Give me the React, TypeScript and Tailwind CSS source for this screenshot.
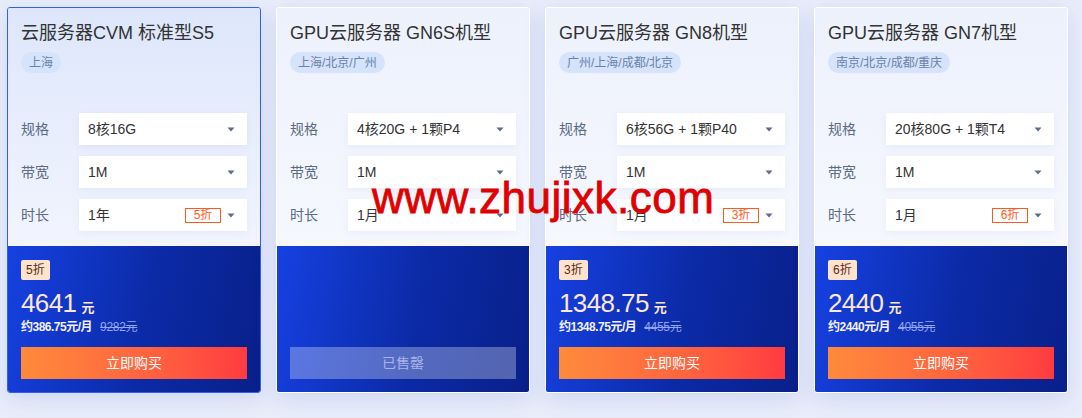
import React from "react";

type Plan = {
  title: string;
  regions: string;
  spec: string;
  duration: string;
  discount?: string;
  price?: string;
  monthly?: string;
  original?: string;
  soldOut?: boolean;
  active?: boolean;
};

const plans: Plan[] = [
  {
    title: "云服务器CVM 标准型S5",
    regions: "上海",
    spec: "8核16G",
    duration: "1年",
    discount: "5折",
    price: "4641",
    monthly: "约386.75元/月",
    original: "9282元",
    active: true,
  },
  {
    title: "GPU云服务器 GN6S机型",
    regions: "上海/北京/广州",
    spec: "4核20G + 1颗P4",
    duration: "1月",
    soldOut: true,
  },
  {
    title: "GPU云服务器 GN8机型",
    regions: "广州/上海/成都/北京",
    spec: "6核56G + 1颗P40",
    duration: "1月",
    discount: "3折",
    price: "1348.75",
    monthly: "约1348.75元/月",
    original: "4455元",
  },
  {
    title: "GPU云服务器 GN7机型",
    regions: "南京/北京/成都/重庆",
    spec: "20核80G + 1颗T4",
    duration: "1月",
    discount: "6折",
    price: "2440",
    monthly: "约2440元/月",
    original: "4055元",
  },
];

function Caret() {
  return (
    <svg width="8" height="5" viewBox="0 0 8 5" className="shrink-0">
      <path d="M0.5 0.5h7L4 4.5z" fill="#5f6d88" />
    </svg>
  );
}

function SelectRow({ label, value, tag }: { label: string; value: string; tag?: string }) {
  return (
    <div className="flex h-8 items-center">
      <span className="w-[58px] shrink-0 text-[14px] text-[#5c6a82]">{label}</span>
      <div className="flex h-8 flex-1 items-center bg-white pl-[9px] pr-[12px] shadow-[0_2px_8px_rgba(90,110,180,0.08)]">
        <span className="flex-1 truncate text-[14px] text-[#333]">{value}</span>
        {tag && (
          <span className="mr-[6px] flex h-[15px] w-9 items-center justify-center border border-[#ff5a1e] text-[12px] leading-none text-[#ff5a1e]">
            {tag}
          </span>
        )}
        <Caret />
      </div>
    </div>
  );
}

function PlanCard({ plan }: { plan: Plan }) {
  return (
    <div
      className={`flex w-[254px] shrink-0 flex-col overflow-hidden rounded-[3px] shadow-[0_6px_22px_rgba(70,100,200,0.16)] ${
        plan.active ? "border border-[#2e62ee]" : "border border-white"
      }`}
    >
      <div
        className={`flex h-[238px] flex-col px-[13px] pt-[13px] ${
          plan.active
            ? "bg-gradient-to-b from-[#dde6fb] to-[#f2f5fe]"
            : "bg-gradient-to-b from-[#edf1fc] to-[#f6f8fe]"
        }`}
      >
        <h3 className="h-6 text-[18px] leading-6 font-normal text-[#333]">{plan.title}</h3>
        <div className="mt-[7px] flex">
          <span className="flex h-[21px] items-center rounded-full bg-[#d5e3fb] px-[8px] text-[12px] text-[#6b82ab]">
            {plan.regions}
          </span>
        </div>
        <div className="mt-10 flex flex-col gap-[11px]">
          <SelectRow label="规格" value={plan.spec} />
          <SelectRow label="带宽" value="1M" />
          <SelectRow label="时长" value={plan.duration} tag={plan.discount} />
        </div>
      </div>
      <div className="flex h-[146px] flex-col bg-[linear-gradient(100deg,#1641e2_0%,#0b2aa6_55%,#09208a_100%)] px-[13px] pt-[14px] pb-[13px]">
        {!plan.soldOut && (
          <>
            <div className="flex">
              <span className="flex h-5 items-center rounded-[2px] bg-[#ffe3cd] px-[5px] text-[12px] text-[#5a2a1a]">
                {plan.discount}
              </span>
            </div>
            <div className="mt-[7px] flex h-8 items-baseline text-[#fce7dd]">
              <span className="text-[26px] leading-8 tracking-[-0.6px]">{plan.price}</span>
              <span className="ml-[5px] text-[13px] font-bold">元</span>
            </div>
            <div className="flex h-4 items-center text-[12px] leading-4">
              <span className="font-bold tracking-[-0.5px] text-[#f3f1ff]">{plan.monthly}</span>
              <span className="ml-[8px] tracking-[-0.3px] text-[#93a5ee] line-through">{plan.original}</span>
            </div>
          </>
        )}
        <button
          className={`mt-auto flex h-8 w-full items-center justify-center text-[14px] ${
            plan.soldOut
              ? "bg-white/30 text-[#aab3e8]"
              : "bg-gradient-to-r from-[#ff8a3b] to-[#ff3a40] text-white"
          }`}
        >
          {plan.soldOut ? "已售罄" : "立即购买"}
        </button>
      </div>
    </div>
  );
}

export default function App() {
  return (
    <div
      className="relative h-[418px] w-[1082px] overflow-hidden bg-[#e9edfa]"
      style={{ fontFamily: '"Liberation Sans", Arial, "Noto Sans CJK SC", sans-serif' }}
    >
      <div className="flex gap-[15px] pt-[7px] pl-[7px]">
        {plans.map((p) => (
          <PlanCard key={p.title} plan={p} />
        ))}
      </div>
      <div className="pointer-events-none absolute top-[172px] left-[372px] text-[44px] leading-[52px] tracking-[0.5px] text-[#e00000] [-webkit-text-stroke:0.8px_#e00000]">
        www.zhujixk.com
      </div>
    </div>
  );
}
